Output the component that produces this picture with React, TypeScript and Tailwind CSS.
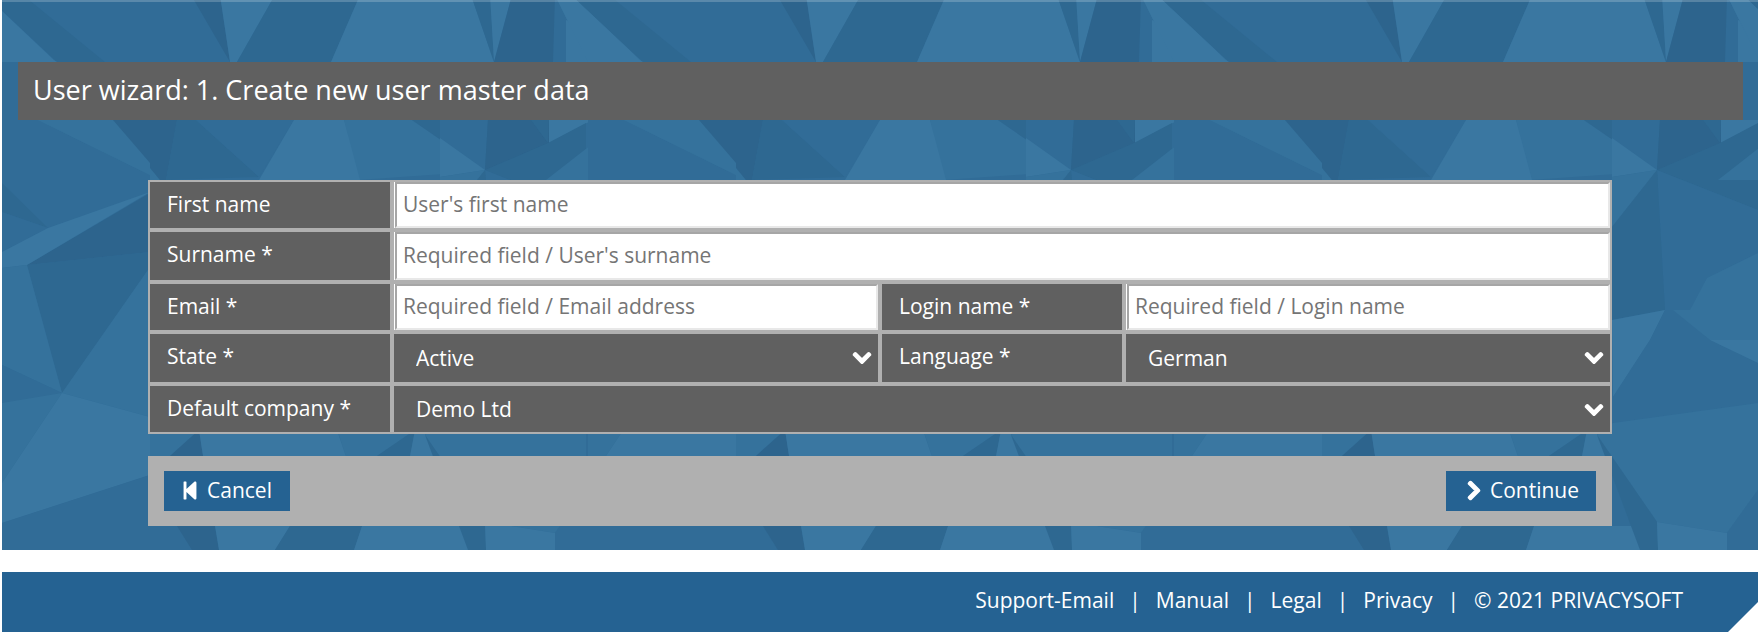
import { FaChevronDown, FaChevronRight, FaStepBackward } from "react-icons/fa";

const LIGHT = "#3a77a1";
const MID = "#35729c";
const BASE = "#316c97";
const DARK = "#2e6891";
const DARKER = "#2d648d";

// low poly background, one tile is 586px wide
const polys: [string, string][] = [
  // top strip
  ["-15,-5 23,-5 105,62 57,62", DARK],
  ["-20,20 57,62 -20,62", LIGHT],
  ["191,-5 220,-5 230,62", DARKER],
  ["220,-5 275,-5 237,62 230,62", LIGHT],
  ["275,-5 360,-5 331,62 237,62", DARK],
  ["360,-5 471,-5 494,62 331,62", LIGHT],
  ["471,-5 490,-5 494,62", DARK],
  ["490,-5 512,-5 494,62", LIGHT],
  ["512,-5 555,-5 553,62 494,62", DARKER],
  ["555,-5 571,-5 642,62 588,62 ", LIGHT],
  ["-31,-5 -15,-5 56,62 2,62", LIGHT],
  // strip under the title
  ["344,120 412,120 486,171 358,180", MID],
  ["412,120 489,120 486,171", DARK],
  ["489,120 549,120 549,143 486,171", DARKER],
  ["549,120 593,120 549,143", LIGHT],
  ["486,171 549,143 585,180 481,180", DARK],
  ["549,143 593,120 623,120 746,180 585,180", BASE],
  ["37,120 111,120 160,180 -40,180", MID],
  ["111,120 177,120 166,180 160,180", DARKER],
  ["177,120 196,120 259,177 166,180", DARK],
  ["196,120 294,120 259,177", BASE],
  ["294,120 344,120 360,180 259,180", LIGHT],
  // left column
  ["2,120 38,120 150,175 150,193 48,228 2,252", BASE],
  ["2,183 48,228 2,212", DARK],
  ["2,212 48,228 2,252", BASE],
  ["113,120 150,120 150,163", DARKER],
  ["38,120 113,120 150,163 150,175", MID],
  ["150,193 27,265 150,252", DARKER],
  ["150,192 48,228 2,252 2,268 27,265", LIGHT],
  ["27,265 150,252 150,267 62,393", DARK],
  ["2,268 27,265 62,393 2,365", MID],
  ["2,365 62,393 2,403", BASE],
  ["2,403 62,393 2,483", MID],
  ["150,267 62,393 150,417", MID],
  ["62,393 150,417 150,475 2,523 2,483", LIGHT],
  ["2,523 150,475 150,550 2,550", BASE],
  // strips around the button bar
  ["150,430 199,430 170,456 150,456", MID],
  ["199,430 203,456 170,456", DARKER],
  ["199,430 337,430 346,456 203,456", LIGHT],
  ["337,430 415,430 377,456 346,456", MID],
  ["415,430 377,456 410,456", DARK],
  ["415,430 423,430 436,456 410,456", LIGHT],
  ["423,430 440,430 440,456 436,456", BASE],
  ["150,526 177,526 192,550 150,550", BASE],
  ["177,526 215,526 219,550 192,550", DARKER],
  ["215,526 290,526 275,550 219,550", LIGHT],
  ["290,526 362,526 354,550 275,550", DARK],
  ["362,526 461,526 471,550 354,550", LIGHT],
  ["461,526 512,526 513,550 471,550", MID],
  ["513,550 555,535 557,550", DARKER],
  // right column, drawn at page position minus two tiles
  ["440,120 488,120 485,170 440,177", BASE],
  ["440,138 485,170 440,177", LIGHT],
  ["488,120 531,120 548,143 485,170", DARKER],
  ["531,120 549,120 548,143", DARK],
  ["549,120 586,120 586,123 549,143", LIGHT],
  ["548,143 586,123 586,210 485,170", DARK],
  ["485,170 586,210 586,253 535,278 518,310 493,310", BASE],
  ["440,177 485,170 440,227", MID],
  ["485,170 440,227 440,320 493,310", DARK],
  ["535,278 586,253 586,345 538,340 501,310 518,310", MID],
  ["440,320 493,310 478,340 441,397", LIGHT],
  ["493,310 538,340 586,363 586,403 441,423 441,397 478,340", BASE],
  ["538,340 586,340 586,363", LIGHT],
  ["441,423 586,403 586,490 555,533 485,522 425,435", MID],
  ["425,435 485,522 486,550 468,550", DARK],
  ["555,533 586,490 586,550 555,550", BASE],
  ["485,522 555,533 555,550 486,550", LIGHT],
];

function Label({ text }: { text: string }) {
  return <div className="bg-[#606060] text-white pl-[17px] pt-[8px]">{text}</div>;
}

function Field({ placeholder, className = "" }: { placeholder: string; className?: string }) {
  return (
    <div className={`bg-white pl-px ${className}`}>
      <input
        type="text"
        placeholder={placeholder}
        className="w-full h-full bg-white pl-[6px] pb-[3px] border-2 border-t-[#a6a6a6] border-l-[#a6a6a6] border-r-[#e8e8e8] border-b-[#e8e8e8] outline-none placeholder:text-[#757575]"
      />
    </div>
  );
}

function Select({ value, className = "" }: { value: string; className?: string }) {
  return (
    <div className={`relative bg-[#606060] ${className}`}>
      <select
        defaultValue={value}
        className="w-full h-full bg-[#606060] text-white pl-[22px] appearance-none outline-none"
      >
        <option>{value}</option>
      </select>
      <FaChevronDown
        stroke="currentColor"
        strokeWidth={40}
        className="absolute right-[6px] top-[14px] w-[20px] h-[20px] text-white pointer-events-none"
      />
    </div>
  );
}

function Button({ icon, text, className = "" }: { icon: React.ReactNode; text: string; className?: string }) {
  return (
    <button className={`w-full h-[40px] pb-[2px] bg-[#256292] text-white flex items-center justify-center gap-[9px] ${className}`}>
      {icon}
      {text}
    </button>
  );
}

export default function App() {
  const links = ["Support-Email", "Manual", "Legal", "Privacy"];

  return (
    <div className="h-[634px] bg-white text-[21px] leading-[28px] overflow-hidden font-['Open_Sans',sans-serif]">
      {/* Main area with the polygon background */}
      <div className="relative ml-[2px] h-[550px] bg-[#316c97] overflow-hidden pt-[62px]">
        <svg className="absolute top-0 left-[-2px]" width="1758" height="550" viewBox="0 0 1758 550">
          {[0, 586, 1172, 1758].map((dx) => (
            <g key={dx} transform={`translate(${dx} 0)`}>
              {polys.map(([points, fill], i) => (
                <polygon key={i} points={points} fill={fill} />
              ))}
            </g>
          ))}
        </svg>
        <div className="absolute top-0 inset-x-0 h-[2px] bg-white/20"></div>

        <div className="relative">
          <div className="ml-[16px] w-[1725px] h-[58px] bg-[#606060] text-white text-[27px] leading-[56px] pl-[15px]">
            User wizard: 1. Create new user master data
          </div>

          <div className="ml-[146px] mt-[60px] w-[1464px]">
            {/* Form */}
            <div className="bg-[#b0b0b0] p-[2px] grid grid-cols-[240px_484px_240px_484px] grid-rows-[46px_48px_46px_48px_46px] gap-[4px]">
              <Label text="First name" />
              <Field placeholder="User's first name" className="col-span-3" />
              <Label text="Surname *" />
              <Field placeholder="Required field / User's surname" className="col-span-3" />
              <Label text="Email *" />
              <Field placeholder="Required field / Email address" />
              <Label text="Login name *" />
              <Field placeholder="Required field / Login name" />
              <Label text="State *" />
              <Select value="Active" />
              <Label text="Language *" />
              <Select value="German" />
              <Label text="Default company *" />
              <Select value="Demo Ltd" className="col-span-3" />
            </div>

            {/* Buttons */}
            <div className="mt-[22px] h-[70px] bg-[#b0b0b0] px-[16px] flex items-center justify-between">
              <div className="w-[126px]">
                <Button icon={<FaStepBackward className="w-[18px] h-[21px] -mx-px" />} text="Cancel" />
              </div>
              <div className="w-[150px]">
                <Button
                  icon={<FaChevronRight stroke="currentColor" strokeWidth={40} className="w-[14px] h-[21px]" />}
                  text="Continue"
                  className="pl-[4px]"
                />
              </div>
            </div>
          </div>
        </div>
      </div>

      {/* Footer */}
      <div className="mt-[22px] ml-[2px] h-[60px] bg-[#256292] text-white flex items-center justify-end pr-[75px] pb-[4px] [clip-path:polygon(0_0,100%_0,100%_50%,calc(100%-30px)_100%,0_100%)]">
        {links.map((link) => (
          <div key={link} className="flex items-center">
            <span>{link}</span>
            <span className="mx-[15px]">|</span>
          </div>
        ))}
        <span>© 2021 PRIVACYSOFT</span>
      </div>
    </div>
  );
}
